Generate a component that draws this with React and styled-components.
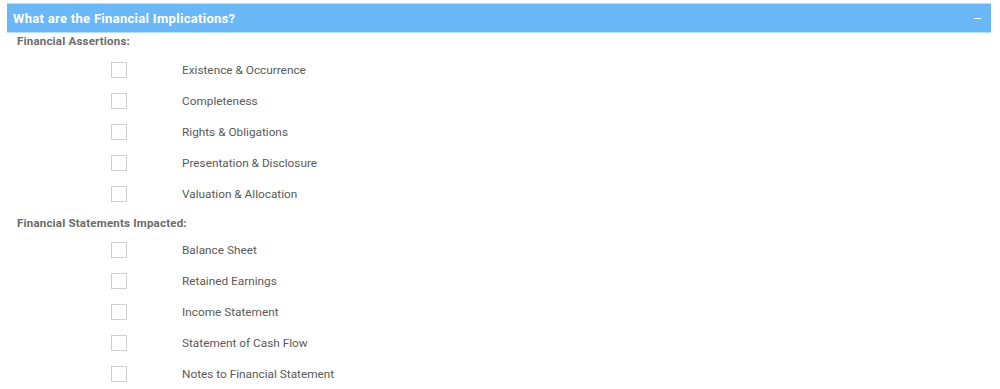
import React from 'react';
import styled, { createGlobalStyle } from 'styled-components';

const GlobalStyle = createGlobalStyle`
  body {
    margin: 0;
    background: #ffffff;
    font-family: Roboto, "Liberation Sans", sans-serif;
  }
`;

const Panel = styled.div`
  margin: 3px 9px 0 7px;
`;

const Header = styled.div`
  display: flex;
  align-items: center;
  justify-content: space-between;
  height: 28px;
  padding: 0 10px 0 6px;
  background-color: #6ab8f8;
  border-top: 1px solid #b5dcfb;
  border-bottom: 1px solid #b5dcfb;
  color: #ffffff;
`;

const Title = styled.h2`
  margin: 0;
  font-size: 13px;
  font-weight: 700;
  letter-spacing: 0.3px;
`;

const Collapse = styled.span`
  display: block;
  width: 7px;
  height: 1px;
  background: #ffffff;
`;

const SectionTitle = styled.div`
  margin: ${(p) => (p.first ? '0' : '6px')} 0 ${(p) => (p.first ? '5px' : '3px')};
  padding-left: 10px;
  line-height: 16px;
  font-size: 11.5px;
  font-weight: 700;
  letter-spacing: 0.2px;
  color: #6b6b6b;
`;

const Row = styled.label`
  display: flex;
  align-items: center;
  height: 31px;
  padding-left: 104px;
  gap: 55px;
  font-size: 11.8px;
  color: #5a5a5a;
`;

const Box = styled.span`
  width: 14px;
  height: 14px;
  border: 1px solid #cfcfcf;
  background: #ffffff;
`;

const sections = [
  {
    title: 'Financial Assertions:',
    items: [
      'Existence & Occurrence',
      'Completeness',
      'Rights & Obligations',
      'Presentation & Disclosure',
      'Valuation & Allocation'
    ]
  },
  {
    title: 'Financial Statements Impacted:',
    items: [
      'Balance Sheet',
      'Retained Earnings',
      'Income Statement',
      'Statement of Cash Flow',
      'Notes to Financial Statement'
    ]
  }
];

function App() {
  return (
    <>
      <GlobalStyle />
      <Panel>
        <Header>
          <Title>What are the Financial Implications?</Title>
          <Collapse />
        </Header>
        {sections.map((section, i) => (
          <div key={section.title}>
            <SectionTitle first={i === 0}>{section.title}</SectionTitle>
            {section.items.map((item) => (
              <Row key={item}>
                <Box />
                <span>{item}</span>
              </Row>
            ))}
          </div>
        ))}
      </Panel>
    </>
  );
}

export default App;
